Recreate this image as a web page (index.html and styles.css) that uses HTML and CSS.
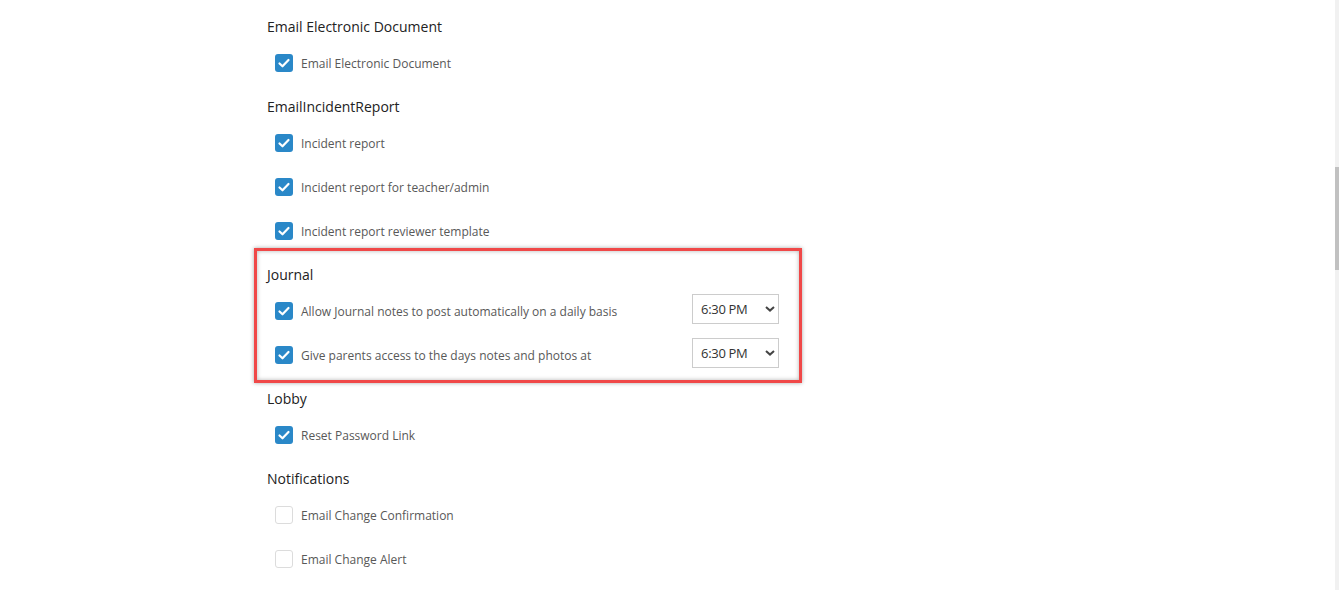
FILE: index.html
```html
<!DOCTYPE html>
<html lang="en">
<head>
    <meta charset="UTF-8">
    <meta name="viewport" content="width=device-width, initial-scale=1.0">
    <title>Email Settings</title>
    <link rel="stylesheet" href="styles.css">
</head>
<body>
    <div class="page">

        <div class="section">
            <h3 class="section-title">Email Electronic Document</h3>
            <div class="row">
                <span class="check checked"><svg viewBox="0 0 18 18"><polyline points="4.5,9.5 7.5,12.3 13.5,6"/></svg></span>
                <span class="label">Email Electronic Document</span>
            </div>
        </div>

        <div class="section">
            <h3 class="section-title">EmailIncidentReport</h3>
            <div class="row">
                <span class="check checked"><svg viewBox="0 0 18 18"><polyline points="4.5,9.5 7.5,12.3 13.5,6"/></svg></span>
                <span class="label">Incident report</span>
            </div>
            <div class="row">
                <span class="check checked"><svg viewBox="0 0 18 18"><polyline points="4.5,9.5 7.5,12.3 13.5,6"/></svg></span>
                <span class="label">Incident report for teacher/admin</span>
            </div>
            <div class="row">
                <span class="check checked"><svg viewBox="0 0 18 18"><polyline points="4.5,9.5 7.5,12.3 13.5,6"/></svg></span>
                <span class="label">Incident report reviewer template</span>
            </div>
        </div>

        <!-- highlighted section -->
        <div class="section highlight">
            <h3 class="section-title">Journal</h3>
            <div class="row">
                <span class="check checked"><svg viewBox="0 0 18 18"><polyline points="4.5,9.5 7.5,12.3 13.5,6"/></svg></span>
                <span class="label">Allow Journal notes to post automatically on a daily basis</span>
                <div class="time-select">
                    <span>6:30 PM</span>
                    <svg viewBox="0 0 10 6"><polyline points="1,1 5,4.6 9,1"/></svg>
                </div>
            </div>
            <div class="row">
                <span class="check checked"><svg viewBox="0 0 18 18"><polyline points="4.5,9.5 7.5,12.3 13.5,6"/></svg></span>
                <span class="label">Give parents access to the days notes and photos at</span>
                <div class="time-select">
                    <span>6:30 PM</span>
                    <svg viewBox="0 0 10 6"><polyline points="1,1 5,4.6 9,1"/></svg>
                </div>
            </div>
        </div>

        <div class="section">
            <h3 class="section-title">Lobby</h3>
            <div class="row">
                <span class="check checked"><svg viewBox="0 0 18 18"><polyline points="4.5,9.5 7.5,12.3 13.5,6"/></svg></span>
                <span class="label">Reset Password Link</span>
            </div>
        </div>

        <div class="section">
            <h3 class="section-title">Notifications</h3>
            <div class="row">
                <span class="check"></span>
                <span class="label">Email Change Confirmation</span>
            </div>
            <div class="row">
                <span class="check"></span>
                <span class="label">Email Change Alert</span>
            </div>
        </div>

    </div>

    <div class="scrollbar"><div class="scrollbar-thumb"></div></div>
</body>
</html>
```

FILE: styles.css
```css
body {
    font-family: 'Open Sans', sans-serif;
    background-color: #ffffff;
    margin: 0;
    padding: 0;
    overflow: hidden;
}

.page {
    padding: 13px 0 0 267px;
}

.section {
    width: 523px;
    margin-bottom: 8px;
}

/* Titel */
.section-title {
    margin: 0;
    height: 28px;
    line-height: 28px;
    font-size: 14px;
    font-weight: normal;
    color: #222222;
}

.row {
    display: flex;
    align-items: center;
    height: 44px;
    padding: 0 11px 0 8px;
}

.check {
    width: 18px;
    height: 18px;
    box-sizing: border-box;
    border: 1.5px solid #dcdcdc;
    border-radius: 3px;
    background-color: #ffffff;
    margin-right: 8px;
    flex-shrink: 0;
}

.check.checked {
    border: none;
    background-color: #2a88c8;
}

.check svg {
    display: block;
    width: 18px;
    height: 18px;
    fill: none;
    stroke: #ffffff;
    stroke-width: 2.2;
    stroke-linecap: round;
    stroke-linejoin: round;
}

.label {
    font-size: 12px;
    color: #585858;
    flex: 1;
}

.time-select {
    display: flex;
    align-items: center;
    justify-content: space-between;
    width: 87px;
    height: 30px;
    box-sizing: border-box;
    border: 1px solid #cccccc;
    padding: 0 3px 0 8px;
    margin-bottom: 5px;
    font-size: 13px;
    letter-spacing: -0.3px;
    color: #333333;
}

.time-select svg {
    width: 10px;
    height: 6px;
    fill: none;
    stroke: #444444;
    stroke-width: 2;
}

.highlight {
    position: relative;
}

.highlight::after {
    content: '';
    position: absolute;
    top: -13px;
    bottom: -6px;
    left: -13px;
    right: -12px;
    border: 3px solid #f04848;
    box-shadow: 0 0 4px rgba(0, 0, 0, 0.35), inset 0 0 4px rgba(0, 0, 0, 0.3);
    pointer-events: none;
}

.scrollbar {
    position: fixed;
    top: 0;
    right: 0;
    width: 4px;
    height: 100%;
    background-color: #f1f1f1;
}

.scrollbar-thumb {
    margin-top: 167px;
    height: 103px;
    background-color: #c1c1c1;
}
```
